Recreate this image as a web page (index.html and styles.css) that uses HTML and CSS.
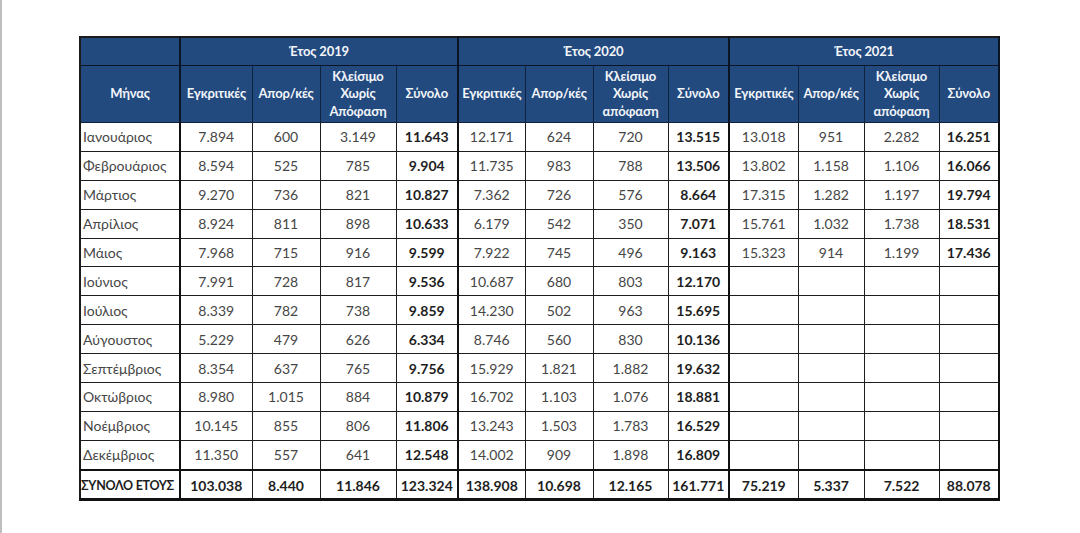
FILE: index.html
```html
<!DOCTYPE html>
<html lang="el">
<head>
<meta charset="utf-8">
<title>Αποφάσεις ανά μήνα</title>
<link rel="stylesheet" href="styles.css">
</head>
<body>
<div class="page">
<table class="stats">
  <colgroup>
    <col class="c-month">
    <col class="c-a"><col class="c-b"><col class="c-c"><col class="c-d">
    <col class="c-a2"><col class="c-b"><col class="c-c2"><col class="c-d2">
    <col class="c-a3"><col class="c-b3"><col class="c-c2"><col class="c-d3">
  </colgroup>
  <thead>
    <tr class="yr">
      <th class="grp"></th>
      <th colspan="4" class="grp">Έτος 2019</th>
      <th colspan="4" class="grp">Έτος 2020</th>
      <th colspan="4" class="grp">Έτος 2021</th>
    </tr>
    <tr class="sub">
      <th class="grp">Μήνας</th>
      <th>Εγκριτικές</th><th>Απορ/κές</th><th>Κλείσιμο<br>Χωρίς<br>Απόφαση</th><th class="grp">Σύνολο</th>
      <th>Εγκριτικές</th><th>Απορ/κές</th><th>Κλείσιμο<br>Χωρίς<br>απόφαση</th><th class="grp">Σύνολο</th>
      <th>Εγκριτικές</th><th>Απορ/κές</th><th>Κλείσιμο<br>Χωρίς<br>απόφαση</th><th class="grp">Σύνολο</th>
    </tr>
  </thead>
  <tbody>
    <tr><td class="m">Ιανουάριος</td><td>7.894</td><td>600</td><td>3.149</td><td class="t">11.643</td><td>12.171</td><td>624</td><td>720</td><td class="t">13.515</td><td>13.018</td><td>951</td><td>2.282</td><td class="t">16.251</td></tr>
    <tr><td class="m">Φεβρουάριος</td><td>8.594</td><td>525</td><td>785</td><td class="t">9.904</td><td>11.735</td><td>983</td><td>788</td><td class="t">13.506</td><td>13.802</td><td>1.158</td><td>1.106</td><td class="t">16.066</td></tr>
    <tr><td class="m">Μάρτιος</td><td>9.270</td><td>736</td><td>821</td><td class="t">10.827</td><td>7.362</td><td>726</td><td>576</td><td class="t">8.664</td><td>17.315</td><td>1.282</td><td>1.197</td><td class="t">19.794</td></tr>
    <tr><td class="m">Απρίλιος</td><td>8.924</td><td>811</td><td>898</td><td class="t">10.633</td><td>6.179</td><td>542</td><td>350</td><td class="t">7.071</td><td>15.761</td><td>1.032</td><td>1.738</td><td class="t">18.531</td></tr>
    <tr><td class="m">Μάιος</td><td>7.968</td><td>715</td><td>916</td><td class="t">9.599</td><td>7.922</td><td>745</td><td>496</td><td class="t">9.163</td><td>15.323</td><td>914</td><td>1.199</td><td class="t">17.436</td></tr>
    <tr><td class="m">Ιούνιος</td><td>7.991</td><td>728</td><td>817</td><td class="t">9.536</td><td>10.687</td><td>680</td><td>803</td><td class="t">12.170</td><td></td><td></td><td></td><td class="t"></td></tr>
    <tr><td class="m">Ιούλιος</td><td>8.339</td><td>782</td><td>738</td><td class="t">9.859</td><td>14.230</td><td>502</td><td>963</td><td class="t">15.695</td><td></td><td></td><td></td><td class="t"></td></tr>
    <tr><td class="m">Αύγουστος</td><td>5.229</td><td>479</td><td>626</td><td class="t">6.334</td><td>8.746</td><td>560</td><td>830</td><td class="t">10.136</td><td></td><td></td><td></td><td class="t"></td></tr>
    <tr><td class="m">Σεπτέμβριος</td><td>8.354</td><td>637</td><td>765</td><td class="t">9.756</td><td>15.929</td><td>1.821</td><td>1.882</td><td class="t">19.632</td><td></td><td></td><td></td><td class="t"></td></tr>
    <tr><td class="m">Οκτώβριος</td><td>8.980</td><td>1.015</td><td>884</td><td class="t">10.879</td><td>16.702</td><td>1.103</td><td>1.076</td><td class="t">18.881</td><td></td><td></td><td></td><td class="t"></td></tr>
    <tr><td class="m">Νοέμβριος</td><td>10.145</td><td>855</td><td>806</td><td class="t">11.806</td><td>13.243</td><td>1.503</td><td>1.783</td><td class="t">16.529</td><td></td><td></td><td></td><td class="t"></td></tr>
    <tr><td class="m">Δεκέμβριος</td><td>11.350</td><td>557</td><td>641</td><td class="t">12.548</td><td>14.002</td><td>909</td><td>1.898</td><td class="t">16.809</td><td></td><td></td><td></td><td class="t"></td></tr>
  </tbody>
  <tfoot>
    <tr><td class="m">ΣΥΝΟΛΟ ΕΤΟΥΣ</td><td>103.038</td><td>8.440</td><td>11.846</td><td class="t">123.324</td><td>138.908</td><td>10.698</td><td>12.165</td><td class="t">161.771</td><td>75.219</td><td>5.337</td><td>7.522</td><td class="t">88.078</td></tr>
  </tfoot>
</table>
</div>
</body>
</html>
```
FILE: styles.css
```css
html, body {
  margin: 0;
  padding: 0;
  background: #fff;
}
.page {
  box-sizing: border-box;
  height: 533px;
  width: 1080px;
  border-left: 2px solid #bdbdbd;
  padding: 36px 0 0 77px;
  font-family: Lato, "Noto Sans", "Liberation Sans", sans-serif;
}
.stats {
  border-collapse: collapse;
  table-layout: fixed;
  width: 920px;
  border: 2px solid #1b1b1b;
}
.c-month { width: 100px; }
.c-a { width: 72px; }
.c-b { width: 68px; }
.c-c { width: 76px; }
.c-d { width: 62px; }
.c-a2 { width: 67px; }
.c-c2 { width: 75px; }
.c-d2 { width: 61px; }
.c-a3 { width: 69px; }
.c-b3 { width: 66px; }
.c-d3 { width: 60px; }

.stats th {
  background: #234a7e;
  color: #f2f5fa;
  font-weight: 700;
  font-size: 13px;
  line-height: 17.5px;
  padding: 0;
  border: 1px solid #0f2340;
  text-align: center;
  white-space: nowrap;
  letter-spacing: -0.15px;
}
.stats th.grp {
  border-right: 2px solid #0b1526;
}
.stats tr.yr th {
  height: 27px;
  border-bottom: 1px solid #0b1526;
}
.stats tr.sub th {
  height: 56px;
}
.stats td {
  height: 27.9px;
  padding: 0;
  border: 1px solid #1e1e1e;
  text-align: center;
  font-size: 14px;
  color: #464646;
  white-space: nowrap;
}
.stats td.m {
  text-align: left;
  padding-left: 2px;
  border-right: 2px solid #111;
}
.stats td.t {
  font-weight: 700;
  color: #1e1e1e;
  border-right: 2px solid #111;
}
.stats tfoot td {
  height: 25px;
  padding-top: 2px;
  font-weight: 700;
  color: #1e1e1e;
  border-top: 2px solid #111;
  border-bottom: 3px solid #111;
}
.stats tfoot td.m {
  font-size: 12.5px;
  letter-spacing: -0.3px;
  padding-left: 0;
}
```
